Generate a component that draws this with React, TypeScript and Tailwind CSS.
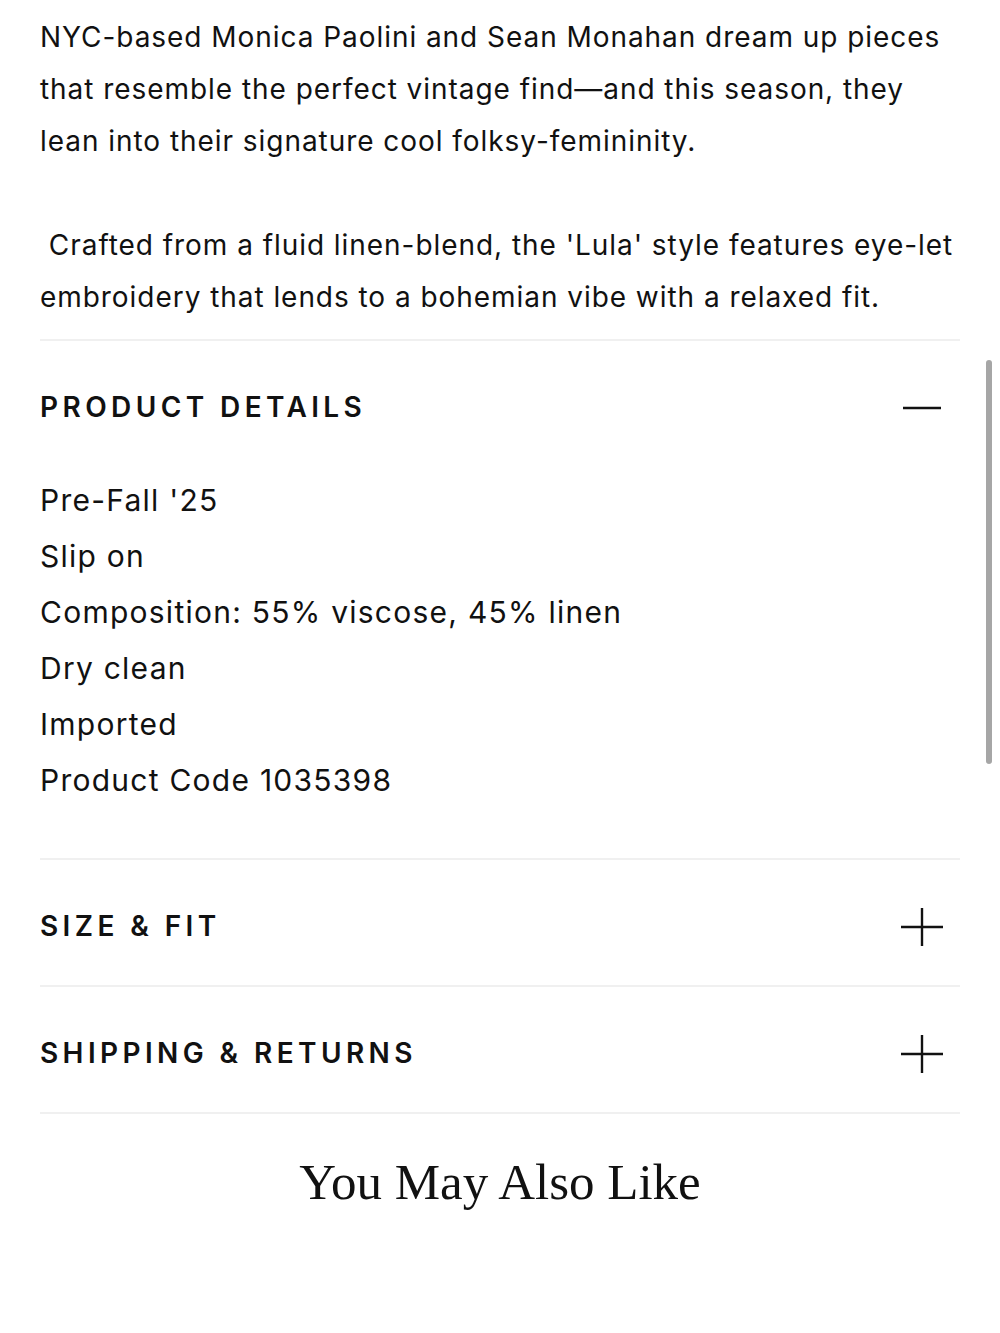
import React from 'react'

const sans = { fontFamily: 'Inter, "Noto Sans", sans-serif' }

function Plus() {
  return (
    <svg width="44" height="40" viewBox="0 0 44 40" fill="none" stroke="#111" strokeWidth="2.4">
      <line x1="1" y1="20" x2="43" y2="20" />
      <line x1="22" y1="1" x2="22" y2="39" />
    </svg>
  )
}

function Minus() {
  return (
    <svg width="44" height="40" viewBox="0 0 44 40" fill="none" stroke="#111" strokeWidth="2.4">
      <line x1="3" y1="20" x2="41" y2="20" />
    </svg>
  )
}

function Row({ title, open }: { title: string; open?: boolean }) {
  return (
    <div className="flex items-center justify-between h-[125px] pt-[6px]">
      <span className="text-[28px] font-semibold tracking-[4.4px] text-[#111] leading-none">{title}</span>
      <span className="mr-[16px] pt-[2px]">{open ? <Minus /> : <Plus />}</span>
    </div>
  )
}

const details = [
  "Pre-Fall '25",
  'Slip on',
  'Composition: 55% viscose, 45% linen',
  'Dry clean',
  'Imported',
  'Product Code 1035398',
]

export default function App() {
  return (
    <div className="relative w-[1000px] min-h-[1333px] bg-white text-[#111]" style={sans}>
      <div className="px-10 pt-[11px]">
        <p className="text-[28px] leading-[52px] tracking-[0.95px] pb-[16px]">
          NYC-based Monica Paolini and Sean Monahan dream up pieces that resemble the perfect vintage find—and this season, they lean into their signature cool folksy-femininity.
          <br />
          <br />
          &nbsp;Crafted from a fluid linen-blend, the 'Lula' style features eye-let embroidery that lends to a bohemian vibe with a relaxed fit.
        </p>

        <div className="border-t-2 border-[#f0f0f0]">
          <Row title="PRODUCT DETAILS" open />
          <ul className="pt-[6px] pb-[50px]">
            {details.map((d) => (
              <li key={d} className="text-[30px] leading-[56px] tracking-[1.25px]">{d}</li>
            ))}
          </ul>
        </div>

        <div className="border-t-2 border-[#f0f0f0]">
          <Row title="SIZE & FIT" />
        </div>
        <div className="border-t-2 border-[#f0f0f0]">
          <Row title="SHIPPING & RETURNS" />
        </div>
        <div className="border-t-2 border-[#f0f0f0] pt-[36px] text-center">
          <h2 className="text-[51px] leading-[64px] text-[#111]" style={{ fontFamily: '"Liberation Serif", serif' }}>
            You May Also Like
          </h2>
        </div>
      </div>

      <div className="absolute left-[986px] top-[360px] w-[6px] h-[404px] rounded-full bg-[#a6a6a6]" />
    </div>
  )
}
